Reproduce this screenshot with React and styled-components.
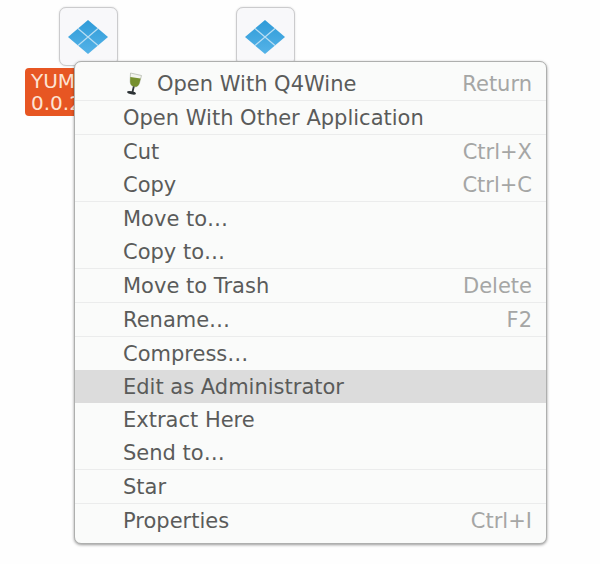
import { Fragment } from "react";
import styled, { createGlobalStyle } from "styled-components";

const GlobalStyle = createGlobalStyle`
  * {
    box-sizing: border-box;
  }

  body {
    margin: 0;
    background: #fefefe;
    font-family: "DejaVu Sans", "Noto Sans", sans-serif;
  }
`;

const Desktop = styled.main`
  position: relative;
  min-height: 100vh;
  overflow: hidden;
`;

const Files = styled.div`
  display: flex;
  gap: 51px;
  padding: 7px 25px;
`;

const File = styled.div`
  display: flex;
  flex-direction: column;
  align-items: center;
  gap: 2px;
  width: 126px;
`;

const FileTile = styled.div`
  display: flex;
  align-items: center;
  justify-content: center;
  width: 59px;
  height: 59px;
  border: 1px solid #cbcbcd;
  border-radius: 7px;
  background: #f8f8fa;
  box-shadow: 0 0 2px rgba(0, 0, 0, 0.16);
`;

const FileName = styled.span`
  width: 100%;
  padding: 2px 6px;
  border-radius: 4px;
  background: #e75623;
  color: #fde3d3;
  font-size: 20px;
  line-height: 22px;
  white-space: pre-line;
`;

const Menu = styled.div`
  position: absolute;
  top: 61px;
  left: 74px;
  right: 53px;
  display: flex;
  flex-direction: column;
  padding: 5px 0 6px;
  border: 1px solid #aeafae;
  border-radius: 7px;
  background: #fafbfa;
  box-shadow: 0 1px 3px rgba(0, 0, 0, 0.4);
`;

const MenuItem = styled.button`
  display: flex;
  align-items: center;
  width: 100%;
  height: 33px;
  padding: 0 14px 0 48px;
  border: none;
  background: ${({ $active }) => ($active ? "#dcdcdc" : "transparent")};
  color: #5a5b5a;
  font-family: inherit;
  font-size: 21px;
  line-height: 24px;
  text-align: left;
  white-space: nowrap;

  &:hover {
    background: #dcdcdc;
  }

  svg {
    margin-right: 10px;
  }
`;

const Shortcut = styled.span`
  margin-left: auto;
  color: #a5a6a5;
`;

const Separator = styled.hr`
  width: 100%;
  height: 1px;
  margin: 0;
  border: none;
  background: #ebecec;
`;

const WindowsIcon = () => (
  <svg width="42" height="36" viewBox="0 0 42 36" aria-hidden="true">
    <defs>
      <linearGradient id="pane" x1="0" y1="0" x2="0" y2="1">
        <stop offset="0" stopColor="#2f9bd8" />
        <stop offset="1" stopColor="#55b3e8" />
      </linearGradient>
    </defs>
    <path d="M21 1L41 18L21 35L1 18Z" fill="url(#pane)" />
    <path d="M11 9.500L31 26.500M31 9.500L11 26.500" stroke="#b9def3" strokeWidth="1.200" />
  </svg>
);

const WineIcon = () => (
  <svg width="24" height="24" viewBox="0 0 24 24" aria-hidden="true">
    <path d="M7.500 1L18.500 3.500L16.500 11C15.500 14.500 12.500 15.500 10.500 14.500C7.500 13.500 7 11 7.200 8Z" fill="#f3f5ee" stroke="#b6bbb0" strokeWidth="0.800" />
    <path d="M7.300 5L17.600 6.500L16.500 11C15.500 14.500 12.500 15.500 10.500 14.500C7.500 13.500 7 11 7.200 8Z" fill="#76902f" />
    <path d="M10.800 14.500L9.500 20" stroke="#333a3c" strokeWidth="1.800" />
    <ellipse cx="8.500" cy="20.800" rx="4.500" ry="1.600" transform="rotate(12 8.500 20.800)" fill="#2c3235" />
  </svg>
);

const groups = [
  [{ label: "Open With Q4Wine", shortcut: "Return", icon: <WineIcon /> }],
  [{ label: "Open With Other Application" }],
  [
    { label: "Cut", shortcut: "Ctrl+X" },
    { label: "Copy", shortcut: "Ctrl+C" },
  ],
  [{ label: "Move to…" }, { label: "Copy to…" }],
  [{ label: "Move to Trash", shortcut: "Delete" }],
  [{ label: "Rename…", shortcut: "F2" }],
  [
    { label: "Compress…" },
    { label: "Edit as Administrator", active: true },
    { label: "Extract Here" },
    { label: "Send to…" },
  ],
  [{ label: "Star" }],
  [{ label: "Properties", shortcut: "Ctrl+I" }],
];

const App = () => {
  return (
    <Desktop>
      <GlobalStyle />
      <Files>
        <File>
          <FileTile>
            <WindowsIcon />
          </FileTile>
          <FileName>{"YUM\n0.0.2"}</FileName>
        </File>
        <File>
          <FileTile>
            <WindowsIcon />
          </FileTile>
        </File>
      </Files>

      <Menu role="menu">
        {groups.map((items, index) => (
          <Fragment key={items[0].label}>
            {index > 0 && <Separator />}
            {items.map(({ label, shortcut, icon, active }) => (
              <MenuItem key={label} type="button" role="menuitem" $active={active}>
                {icon}
                {label}
                {shortcut && <Shortcut>{shortcut}</Shortcut>}
              </MenuItem>
            ))}
          </Fragment>
        ))}
      </Menu>
    </Desktop>
  );
};

export default App;
